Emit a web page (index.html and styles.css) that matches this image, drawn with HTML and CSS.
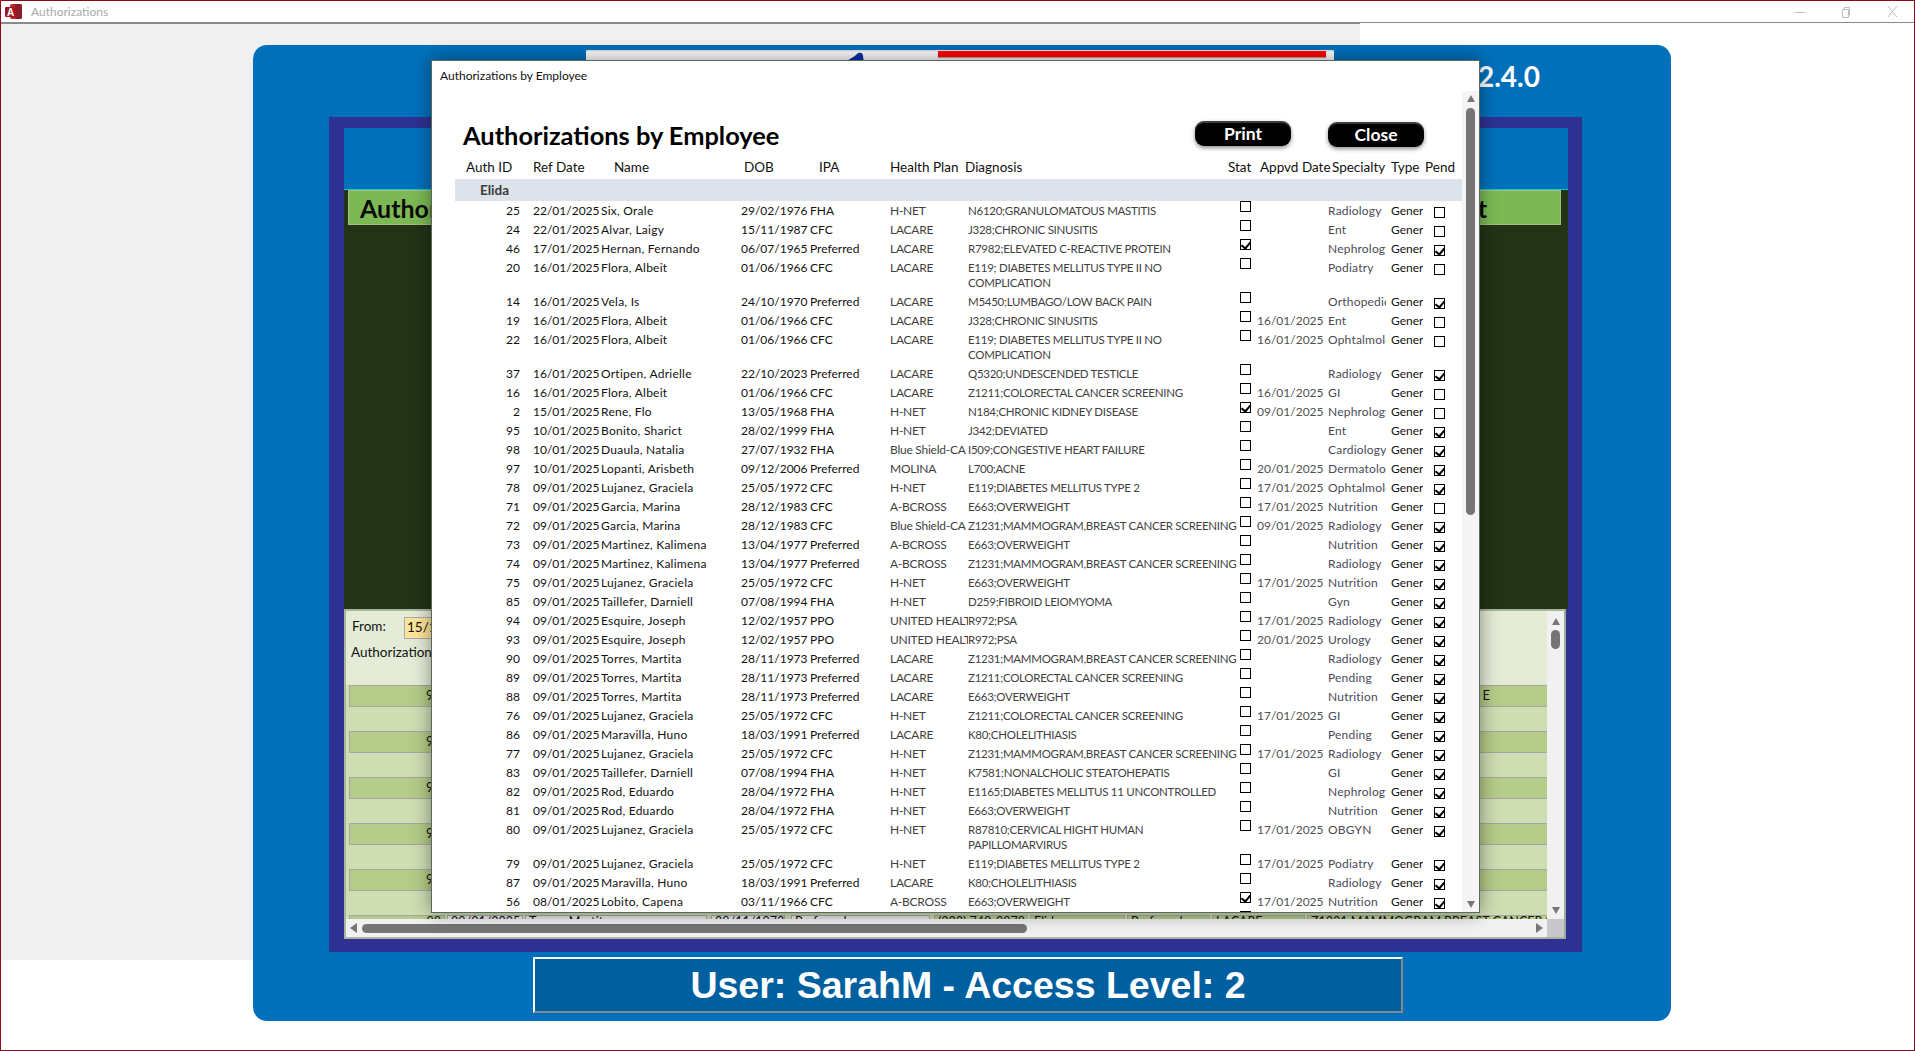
FILE: index.html
```html
<!DOCTYPE html>
<html lang="en">
<head>
<meta charset="utf-8">
<title>Authorizations</title>
<link rel="stylesheet" href="styles.css">
</head>
<body>
<div class="window">
  <header class="titlebar">
    <svg class="app-icon" viewBox="0 0 17 17" width="17" height="17"><rect x="5" y="1" width="12" height="15" rx="2" fill="#b02a34"/><rect x="10" y="1" width="7" height="15" rx="2" fill="#8e1c26"/><rect x="0" y="4" width="11" height="10" rx="1" fill="#a4161f"/><text x="2" y="12.500" class="app-letter">A</text></svg>
    <span class="app-title">Authorizations</span>
    <div class="win-controls">
      <svg width="10" height="10" viewBox="0 0 10 10"><path d="M0 5.500H10" stroke="#bbb"/></svg>
      <svg width="10" height="12" viewBox="0 0 10 12"><path d="M1.500 3.500H7.500V11.500H1.500ZM3.500 3V1.500H8.500V9H8" fill="none" stroke="#bbb"/></svg>
      <svg width="11" height="11" viewBox="0 0 11 11"><path d="M1 0L10 11M10 0L1 11" stroke="#bbb"/></svg>
    </div>
  </header>
  <main class="client">
    <div class="backdrop"></div>
    <section class="panel">
      <div class="topstrip">
        <svg class="blob" width="18" height="11" viewBox="0 0 18 11"><path d="M0 11C1 7 8 6 11 2C13 0 17 0 17 4L18 11Z" fill="#0a2fa8"/></svg>
        <span class="redbar"></span>
      </div>
      <div class="version">Version 2.4.0</div>
      <div class="frame">
        <div class="frame-blue"></div>
        <div class="darkarea">
          <div class="greenhead"><span>Authorizations by Employee Report</span><span>t</span></div>
        </div>
        <div class="subform">
          <div class="subform-body">
            <div class="formhead">
              <div class="fromline"><span class="lbl">From:</span><span class="fromdate">15/1</span></div>
              <div class="authlbl">Authorizations</div>
            </div>
            <div class="greenrow"><div class="band"><span class="bandnum">9</span><span class="bandend">E</span></div></div>
            <div class="greenrow"><div class="band"><span class="bandnum">9</span></div></div>
            <div class="greenrow"><div class="band"><span class="bandnum">9</span></div></div>
            <div class="greenrow"><div class="band"><span class="bandnum">9</span></div></div>
            <div class="greenrow"><div class="band"><span class="bandnum">9</span></div></div>
            <div class="cellrow">
              <span class="c c1">88</span><span class="c c2">09/01/2025</span><span class="c c3">Torres, Martita</span><span class="c c4">28/11/1973</span><span class="c c5">Preferred</span><span class="c c6">(323) 740-9878</span><span class="c c7">Elida</span><span class="c c8">Preferred</span><span class="c c9">LACARE</span><span class="c c10">Z1231;MAMMOGRAM,BREAST CANCER SCREENING</span>
            </div>
          </div>
          <div class="vbar"><i class="arrow up"></i><i class="vthumb"></i><i class="arrow down push"></i></div>
          <div class="hbar"><i class="arrow left"></i><i class="hthumb"></i><i class="arrow right push"></i></div>
          <div class="corner"></div>
        </div>
      </div>
      <div class="userbar">User: SarahM - Access Level: 2</div>
    </section>

    <section class="dialog">
      <div class="dlg-title">Authorizations by Employee</div>
      <div class="dlg-scroll"><i class="arrow up"></i><i class="dthumb"></i><i class="arrow down push"></i></div>
      <div class="report">
        <div class="rpt-top">
          <h1>Authorizations by Employee</h1>
          <button class="pill pill-print">Print</button>
          <button class="pill pill-close">Close</button>
        </div>
        <div class="row head">
          <span class="h-id">Auth ID</span><span class="h-date">Ref Date</span><span class="h-name">Name</span><span class="h-dob">DOB</span><span class="h-ipa">IPA</span><span class="h-plan">Health Plan</span><span class="h-diag">Diagnosis</span><span class="h-stat">Stat</span><span class="h-appr">Appvd Date</span><span class="h-spec">Specialty</span><span class="h-type">Type</span><span class="h-pend">Pend</span>
        </div>
        <div class="group">Elida</div>

        <div class="row"><span class="id">25</span><span class="dt">22/01/2025</span><span class="nm">Six, Orale</span><span class="dob">29/02/1976</span><span class="ipa">FHA</span><span class="pl">H-NET</span><span class="dg">N6120;GRANULOMATOUS MASTITIS</span><i class="cb st"></i><span class="ap"></span><span class="sp">Radiology</span><span class="ty">General</span><i class="cb pd"></i></div>
        <div class="row"><span class="id">24</span><span class="dt">22/01/2025</span><span class="nm">Alvar, Laigy</span><span class="dob">15/11/1987</span><span class="ipa">CFC</span><span class="pl">LACARE</span><span class="dg">J328;CHRONIC SINUSITIS</span><i class="cb st"></i><span class="ap"></span><span class="sp">Ent</span><span class="ty">General</span><i class="cb pd"></i></div>
        <div class="row"><span class="id">46</span><span class="dt">17/01/2025</span><span class="nm">Hernan, Fernando</span><span class="dob">06/07/1965</span><span class="ipa">Preferred</span><span class="pl">LACARE</span><span class="dg">R7982;ELEVATED C-REACTIVE PROTEIN</span><i class="cb st on"></i><span class="ap"></span><span class="sp">Nephrology</span><span class="ty">General</span><i class="cb pd on"></i></div>
        <div class="row tall"><span class="id">20</span><span class="dt">16/01/2025</span><span class="nm">Flora, Albeit</span><span class="dob">01/06/1966</span><span class="ipa">CFC</span><span class="pl">LACARE</span><span class="dg">E119; DIABETES MELLITUS TYPE II NO<br>COMPLICATION</span><i class="cb st"></i><span class="ap"></span><span class="sp">Podiatry</span><span class="ty">General</span><i class="cb pd"></i></div>
        <div class="row"><span class="id">14</span><span class="dt">16/01/2025</span><span class="nm">Vela, Is</span><span class="dob">24/10/1970</span><span class="ipa">Preferred</span><span class="pl">LACARE</span><span class="dg">M5450;LUMBAGO/LOW BACK PAIN</span><i class="cb st"></i><span class="ap"></span><span class="sp">Orthopedics</span><span class="ty">General</span><i class="cb pd on"></i></div>
        <div class="row"><span class="id">19</span><span class="dt">16/01/2025</span><span class="nm">Flora, Albeit</span><span class="dob">01/06/1966</span><span class="ipa">CFC</span><span class="pl">LACARE</span><span class="dg">J328;CHRONIC SINUSITIS</span><i class="cb st"></i><span class="ap">16/01/2025</span><span class="sp">Ent</span><span class="ty">General</span><i class="cb pd"></i></div>
        <div class="row tall"><span class="id">22</span><span class="dt">16/01/2025</span><span class="nm">Flora, Albeit</span><span class="dob">01/06/1966</span><span class="ipa">CFC</span><span class="pl">LACARE</span><span class="dg">E119; DIABETES MELLITUS TYPE II NO<br>COMPLICATION</span><i class="cb st"></i><span class="ap">16/01/2025</span><span class="sp">Ophtalmology</span><span class="ty">General</span><i class="cb pd"></i></div>
        <div class="row"><span class="id">37</span><span class="dt">16/01/2025</span><span class="nm">Ortipen, Adrielle</span><span class="dob">22/10/2023</span><span class="ipa">Preferred</span><span class="pl">LACARE</span><span class="dg">Q5320;UNDESCENDED TESTICLE</span><i class="cb st"></i><span class="ap"></span><span class="sp">Radiology</span><span class="ty">General</span><i class="cb pd on"></i></div>
        <div class="row"><span class="id">16</span><span class="dt">16/01/2025</span><span class="nm">Flora, Albeit</span><span class="dob">01/06/1966</span><span class="ipa">CFC</span><span class="pl">LACARE</span><span class="dg">Z1211;COLORECTAL CANCER SCREENING</span><i class="cb st"></i><span class="ap">16/01/2025</span><span class="sp">GI</span><span class="ty">General</span><i class="cb pd"></i></div>
        <div class="row"><span class="id">2</span><span class="dt">15/01/2025</span><span class="nm">Rene, Flo</span><span class="dob">13/05/1968</span><span class="ipa">FHA</span><span class="pl">H-NET</span><span class="dg">N184;CHRONIC KIDNEY DISEASE</span><i class="cb st on"></i><span class="ap">09/01/2025</span><span class="sp">Nephrology</span><span class="ty">General</span><i class="cb pd"></i></div>
        <div class="row"><span class="id">95</span><span class="dt">10/01/2025</span><span class="nm">Bonito, Sharict</span><span class="dob">28/02/1999</span><span class="ipa">FHA</span><span class="pl">H-NET</span><span class="dg">J342;DEVIATED</span><i class="cb st"></i><span class="ap"></span><span class="sp">Ent</span><span class="ty">General</span><i class="cb pd on"></i></div>
        <div class="row"><span class="id">98</span><span class="dt">10/01/2025</span><span class="nm">Duaula, Natalia</span><span class="dob">27/07/1932</span><span class="ipa">FHA</span><span class="pl">Blue Shield-CA</span><span class="dg">I509;CONGESTIVE HEART FAILURE</span><i class="cb st"></i><span class="ap"></span><span class="sp">Cardiology</span><span class="ty">General</span><i class="cb pd on"></i></div>
        <div class="row"><span class="id">97</span><span class="dt">10/01/2025</span><span class="nm">Lopanti, Arisbeth</span><span class="dob">09/12/2006</span><span class="ipa">Preferred</span><span class="pl">MOLINA</span><span class="dg">L700;ACNE</span><i class="cb st"></i><span class="ap">20/01/2025</span><span class="sp">Dermatology</span><span class="ty">General</span><i class="cb pd on"></i></div>
        <div class="row"><span class="id">78</span><span class="dt">09/01/2025</span><span class="nm">Lujanez, Graciela</span><span class="dob">25/05/1972</span><span class="ipa">CFC</span><span class="pl">H-NET</span><span class="dg">E119;DIABETES MELLITUS TYPE 2</span><i class="cb st"></i><span class="ap">17/01/2025</span><span class="sp">Ophtalmology</span><span class="ty">General</span><i class="cb pd on"></i></div>
        <div class="row"><span class="id">71</span><span class="dt">09/01/2025</span><span class="nm">Garcia, Marina</span><span class="dob">28/12/1983</span><span class="ipa">CFC</span><span class="pl">A-BCROSS</span><span class="dg">E663;OVERWEIGHT</span><i class="cb st"></i><span class="ap">17/01/2025</span><span class="sp">Nutrition</span><span class="ty">General</span><i class="cb pd"></i></div>
        <div class="row"><span class="id">72</span><span class="dt">09/01/2025</span><span class="nm">Garcia, Marina</span><span class="dob">28/12/1983</span><span class="ipa">CFC</span><span class="pl">Blue Shield-CA</span><span class="dg">Z1231;MAMMOGRAM,BREAST CANCER SCREENING</span><i class="cb st"></i><span class="ap">09/01/2025</span><span class="sp">Radiology</span><span class="ty">General</span><i class="cb pd on"></i></div>
        <div class="row"><span class="id">73</span><span class="dt">09/01/2025</span><span class="nm">Martinez, Kalimena</span><span class="dob">13/04/1977</span><span class="ipa">Preferred</span><span class="pl">A-BCROSS</span><span class="dg">E663;OVERWEIGHT</span><i class="cb st"></i><span class="ap"></span><span class="sp">Nutrition</span><span class="ty">General</span><i class="cb pd on"></i></div>
        <div class="row"><span class="id">74</span><span class="dt">09/01/2025</span><span class="nm">Martinez, Kalimena</span><span class="dob">13/04/1977</span><span class="ipa">Preferred</span><span class="pl">A-BCROSS</span><span class="dg">Z1231;MAMMOGRAM,BREAST CANCER SCREENING</span><i class="cb st"></i><span class="ap"></span><span class="sp">Radiology</span><span class="ty">General</span><i class="cb pd on"></i></div>
        <div class="row"><span class="id">75</span><span class="dt">09/01/2025</span><span class="nm">Lujanez, Graciela</span><span class="dob">25/05/1972</span><span class="ipa">CFC</span><span class="pl">H-NET</span><span class="dg">E663;OVERWEIGHT</span><i class="cb st"></i><span class="ap">17/01/2025</span><span class="sp">Nutrition</span><span class="ty">General</span><i class="cb pd on"></i></div>
        <div class="row"><span class="id">85</span><span class="dt">09/01/2025</span><span class="nm">Taillefer, Darniell</span><span class="dob">07/08/1994</span><span class="ipa">FHA</span><span class="pl">H-NET</span><span class="dg">D259;FIBROID LEIOMYOMA</span><i class="cb st"></i><span class="ap"></span><span class="sp">Gyn</span><span class="ty">General</span><i class="cb pd on"></i></div>
        <div class="row"><span class="id">94</span><span class="dt">09/01/2025</span><span class="nm">Esquire, Joseph</span><span class="dob">12/02/1957</span><span class="ipa">PPO</span><span class="pl">UNITED HEALTH</span><span class="dg">R972;PSA</span><i class="cb st"></i><span class="ap">17/01/2025</span><span class="sp">Radiology</span><span class="ty">General</span><i class="cb pd on"></i></div>
        <div class="row"><span class="id">93</span><span class="dt">09/01/2025</span><span class="nm">Esquire, Joseph</span><span class="dob">12/02/1957</span><span class="ipa">PPO</span><span class="pl">UNITED HEALTH</span><span class="dg">R972;PSA</span><i class="cb st"></i><span class="ap">20/01/2025</span><span class="sp">Urology</span><span class="ty">General</span><i class="cb pd on"></i></div>
        <div class="row"><span class="id">90</span><span class="dt">09/01/2025</span><span class="nm">Torres, Martita</span><span class="dob">28/11/1973</span><span class="ipa">Preferred</span><span class="pl">LACARE</span><span class="dg">Z1231;MAMMOGRAM,BREAST CANCER SCREENING</span><i class="cb st"></i><span class="ap"></span><span class="sp">Radiology</span><span class="ty">General</span><i class="cb pd on"></i></div>
        <div class="row"><span class="id">89</span><span class="dt">09/01/2025</span><span class="nm">Torres, Martita</span><span class="dob">28/11/1973</span><span class="ipa">Preferred</span><span class="pl">LACARE</span><span class="dg">Z1211;COLORECTAL CANCER SCREENING</span><i class="cb st"></i><span class="ap"></span><span class="sp">Pending</span><span class="ty">General</span><i class="cb pd on"></i></div>
        <div class="row"><span class="id">88</span><span class="dt">09/01/2025</span><span class="nm">Torres, Martita</span><span class="dob">28/11/1973</span><span class="ipa">Preferred</span><span class="pl">LACARE</span><span class="dg">E663;OVERWEIGHT</span><i class="cb st"></i><span class="ap"></span><span class="sp">Nutrition</span><span class="ty">General</span><i class="cb pd on"></i></div>
        <div class="row"><span class="id">76</span><span class="dt">09/01/2025</span><span class="nm">Lujanez, Graciela</span><span class="dob">25/05/1972</span><span class="ipa">CFC</span><span class="pl">H-NET</span><span class="dg">Z1211;COLORECTAL CANCER SCREENING</span><i class="cb st"></i><span class="ap">17/01/2025</span><span class="sp">GI</span><span class="ty">General</span><i class="cb pd on"></i></div>
        <div class="row"><span class="id">86</span><span class="dt">09/01/2025</span><span class="nm">Maravilla, Huno</span><span class="dob">18/03/1991</span><span class="ipa">Preferred</span><span class="pl">LACARE</span><span class="dg">K80;CHOLELITHIASIS</span><i class="cb st"></i><span class="ap"></span><span class="sp">Pending</span><span class="ty">General</span><i class="cb pd on"></i></div>
        <div class="row"><span class="id">77</span><span class="dt">09/01/2025</span><span class="nm">Lujanez, Graciela</span><span class="dob">25/05/1972</span><span class="ipa">CFC</span><span class="pl">H-NET</span><span class="dg">Z1231;MAMMOGRAM,BREAST CANCER SCREENING</span><i class="cb st"></i><span class="ap">17/01/2025</span><span class="sp">Radiology</span><span class="ty">General</span><i class="cb pd on"></i></div>
        <div class="row"><span class="id">83</span><span class="dt">09/01/2025</span><span class="nm">Taillefer, Darniell</span><span class="dob">07/08/1994</span><span class="ipa">FHA</span><span class="pl">H-NET</span><span class="dg">K7581;NONALCHOLIC STEATOHEPATIS</span><i class="cb st"></i><span class="ap"></span><span class="sp">GI</span><span class="ty">General</span><i class="cb pd on"></i></div>
        <div class="row"><span class="id">82</span><span class="dt">09/01/2025</span><span class="nm">Rod, Eduardo</span><span class="dob">28/04/1972</span><span class="ipa">FHA</span><span class="pl">H-NET</span><span class="dg">E1165;DIABETES MELLITUS 11 UNCONTROLLED</span><i class="cb st"></i><span class="ap"></span><span class="sp">Nephrology</span><span class="ty">General</span><i class="cb pd on"></i></div>
        <div class="row"><span class="id">81</span><span class="dt">09/01/2025</span><span class="nm">Rod, Eduardo</span><span class="dob">28/04/1972</span><span class="ipa">FHA</span><span class="pl">H-NET</span><span class="dg">E663;OVERWEIGHT</span><i class="cb st"></i><span class="ap"></span><span class="sp">Nutrition</span><span class="ty">General</span><i class="cb pd on"></i></div>
        <div class="row tall"><span class="id">80</span><span class="dt">09/01/2025</span><span class="nm">Lujanez, Graciela</span><span class="dob">25/05/1972</span><span class="ipa">CFC</span><span class="pl">H-NET</span><span class="dg">R87810;CERVICAL HIGHT HUMAN<br>PAPILLOMARVIRUS</span><i class="cb st"></i><span class="ap">17/01/2025</span><span class="sp">OBGYN</span><span class="ty">General</span><i class="cb pd on"></i></div>
        <div class="row"><span class="id">79</span><span class="dt">09/01/2025</span><span class="nm">Lujanez, Graciela</span><span class="dob">25/05/1972</span><span class="ipa">CFC</span><span class="pl">H-NET</span><span class="dg">E119;DIABETES MELLITUS TYPE 2</span><i class="cb st"></i><span class="ap">17/01/2025</span><span class="sp">Podiatry</span><span class="ty">General</span><i class="cb pd on"></i></div>
        <div class="row"><span class="id">87</span><span class="dt">09/01/2025</span><span class="nm">Maravilla, Huno</span><span class="dob">18/03/1991</span><span class="ipa">Preferred</span><span class="pl">LACARE</span><span class="dg">K80;CHOLELITHIASIS</span><i class="cb st"></i><span class="ap"></span><span class="sp">Radiology</span><span class="ty">General</span><i class="cb pd on"></i></div>
        <div class="row"><span class="id">56</span><span class="dt">08/01/2025</span><span class="nm">Lobito, Capena</span><span class="dob">03/11/1966</span><span class="ipa">CFC</span><span class="pl">A-BCROSS</span><span class="dg">E663;OVERWEIGHT</span><i class="cb st on"></i><span class="ap">17/01/2025</span><span class="sp">Nutrition</span><span class="ty">General</span><i class="cb pd on"></i></div>
        <div class="row"><span class="id"></span><span class="dt"></span><span class="nm"></span><span class="dob"></span><span class="ipa"></span><span class="pl"></span><span class="dg"></span><i class="cb st"></i></div>
      </div>
    </section>
  </main>
</div>
</body>
</html>
```

FILE: styles.css
```css
* { box-sizing: border-box; }
html, body { margin: 0; height: 100%; overflow: hidden; background: #fff; }
body { font-family: "Lato", "Liberation Sans", sans-serif; color: #111; }
i { display: block; font-style: normal; }

.window { width: 1915px; height: 1051px; border: 1px solid #8b0a14; display: flex; flex-direction: column; overflow: hidden; background: #fff; }

.titlebar { height: 22px; flex: none; display: flex; align-items: center; padding-left: 4px; background: #fff; border-bottom: 1px solid #8a8a8a; }
.app-icon { flex: none; }
.app-letter { font: bold 10px "Liberation Sans", sans-serif; fill: #fff; }
.app-title { margin-left: 9px; font-size: 12px; color: #aaa; }
.win-controls { margin-left: auto; width: 103px; margin-right: 16px; display: flex; justify-content: space-between; align-items: center; }

.client { position: relative; flex: 1; min-height: 0; background: #fff; }
.backdrop { position: absolute; left: 0; top: 0; width: 1359px; height: 937px; background: #f0f0f0; border-top: 1px solid #8a8a8a; }

.panel { position: relative; margin: 22px 0 0 252px; width: 1418px; height: 976px; background: #0070bb; border-radius: 14px; padding: 72px 88px 0 76px; }
.topstrip { position: absolute; left: 333px; top: 5px; width: 748px; height: 20px; background: linear-gradient(#d8d8d8, #fdfdfd 12%, #fff); }
.blob { position: absolute; left: 260px; top: 2px; }
.redbar { position: absolute; left: 352px; top: 1px; width: 388px; height: 6px; background: #ff0505; box-shadow: 0 1px 1px #c99; }
.version { position: absolute; right: 131px; top: 14px; font-size: 28px; font-weight: 700; color: #fff; white-space: nowrap; }

.frame { width: 1253px; height: 835px; background: #2e3192; padding: 11px 14px 13px 15px; display: flex; flex-direction: column; }
.frame-blue { height: 62px; flex: none; background: #0070bb; border-bottom: 1px solid #19c7c7; }
.darkarea { height: 419px; flex: none; background: #223316; padding-left: 4px; }
.greenhead { width: 1213px; height: 35px; background: #7cb955; border: 1px solid #a0c080; display: flex; justify-content: space-between; align-items: center; padding: 0 73px 0 11px; font-size: 25px; font-weight: 700; color: #0a0a0a; white-space: nowrap; }

.subform { flex: 1; min-height: 0; position: relative; margin-right: 2px; display: grid; grid-template-columns: 1fr 17px; grid-template-rows: 1fr 18px; border: 2px solid #a9b59c; border-right-color: #9fa99a; background: #cfddb2; }
.subform-body { overflow: hidden; min-height: 0; }
.formhead { height: 74px; background: #e4ecd8; padding: 6px 5px 0; font-size: 13.500px; }
.fromline { display: flex; align-items: flex-start; height: 22px; }
.lbl { width: 53px; padding-left: 1px; line-height: 18px; }
.fromdate { width: 120px; height: 22px; background: #ffe59a; border: 1px solid #aaa; padding: 1px 2px; }
.authlbl { margin-top: 5px; }
.greenrow { height: 46px; }
.band { height: 22px; background: #b5cb88; border: 1px solid #a6a6a6; border-width: 1px 0 1px 1px; margin-left: 3px; display: flex; justify-content: space-between; font-size: 13px; padding: 1px 0 0; }
.bandnum { margin-left: 76px; }
.bandend { margin-right: 57px; }
.cellrow { display: flex; height: 6px; gap: 2px; margin-left: 3px; overflow: hidden; }
.c { display: block; height: 22px; font-size: 12.500px; line-height: 12px; padding: 0 3px; white-space: nowrap; overflow: hidden; border: 1px solid #a6a6a6; background: #b5cb88; flex: none; }
.c1 { width: 96px; text-align: right; }
.c2 { width: 76px; background: #e6e6e6; }
.c3 { width: 182px; background: #e6e6e6; }
.c4 { width: 74px; background: #e6e6e6; margin-left: 2px; }
.c5 { width: 139px; background: #e6e6e6; margin-left: 4px; }
.c6 { width: 94px; margin-left: 2px; }
.c7 { width: 95px; }
.c8 { width: 83px; }
.c9 { width: 93px; }
.c10 { width: 245px; }

.vbar { grid-row: 1; grid-column: 2; background: #f1f1f1; display: flex; flex-direction: column; align-items: center; padding: 7px 0 5px; }
.hbar { grid-row: 2; grid-column: 1; background: #f1f1f1; display: flex; align-items: center; padding: 0 4px; }
.corner { grid-row: 2; grid-column: 2; background: #c8c8cc; }
.vthumb { width: 9px; height: 19px; margin-top: 5px; background: #757575; border-radius: 5px; }
.hthumb { width: 665px; height: 9px; margin-left: 5px; background: #757575; border-radius: 5px; }
.arrow { flex: none; width: 0; height: 0; border: 5px solid transparent; }
.arrow.up { border-top-width: 0; border-bottom: 7px solid #777; border-left-width: 4px; border-right-width: 4px; }
.arrow.down { border-bottom-width: 0; border-top: 7px solid #777; border-left-width: 4px; border-right-width: 4px; }
.arrow.left { border-left-width: 0; border-right: 7px solid #777; }
.arrow.right { border-right-width: 0; border-left: 7px solid #777; }
.push { margin-top: auto; }
.hbar .push { margin-top: 0; margin-left: auto; }

.userbar { margin: 5px 0 0 204px; width: 870px; height: 56px; background: #005f9f; border: 2px solid; border-color: #fff #888 #888 #fff; color: #fff; font: 700 37.500px/52px "Liberation Sans", sans-serif; text-align: center; }

.dialog { position: absolute; left: 430px; top: 37px; width: 1049px; height: 853px; background: #fff; border: 1px solid #5a6a5a; box-shadow: 0 0 18px rgba(0, 0, 0, .42); overflow: hidden; }
.dlg-title { position: absolute; left: 8px; top: 7px; font-size: 12px; color: #111; }
.dlg-scroll { position: absolute; right: 0; top: 30px; bottom: 0; width: 17px; background: #f5f5f5; display: flex; flex-direction: column; align-items: center; padding: 4px 0; }
.dthumb { width: 9px; height: 407px; margin-top: 6px; background: #757575; border-radius: 5px; }

.report { padding: 0 0 0 23px; }
.rpt-top { height: 94px; display: flex; align-items: flex-start; padding: 59px 0 0 8px; }
.rpt-top h1 { margin: 0; font-size: 25.400px; font-weight: 700; line-height: 30px; color: #000; white-space: nowrap; width: 732px; }
.pill { width: 96px; height: 25px; border: 0; padding: 0; background: #000; color: #fff; font: 700 17.500px "Lato", sans-serif; border-radius: 9px; box-shadow: 0 2px 4px rgba(0, 0, 0, .45), inset 0 2px 1px rgba(255, 255, 255, .25); flex: none; }
.pill-print { margin-top: 1px; }
.pill-close { margin: 2px 0 0 37px; }

.row { display: grid; grid-template-columns: 65px 13px 68px 140px 69px 80px 78px 272px 17px 71px 63px 43px 14px; height: 19px; font-size: 12px; line-height: 19px; white-space: nowrap; color: #111; }
.row.tall { height: 34px; }
.row > span { overflow: hidden; }
.row .id { grid-column: 1; text-align: right; }
.row .dt { grid-column: 3; }
.row .nm { grid-column: 4; letter-spacing: .25px; }
.row .dob { grid-column: 5; }
.row .ipa { grid-column: 6; }
.row .pl { grid-column: 7; color: #3f3f3f; font-size: 12px; letter-spacing: -.25px; }
.row .dg { grid-column: 8; color: #3f3f3f; font-size: 11.500px; letter-spacing: -.28px; line-height: 15px; padding-top: 2px; }
.row .st { grid-column: 9; }
.row .ap { grid-column: 10; color: #505050; }
.row .sp { grid-column: 11; color: #4a4a58; letter-spacing: .2px; margin-right: 5px; }
.row .ty { grid-column: 12; margin-right: 11px; }
.row .pd { grid-column: 13; margin-top: 6px; }

.cb { width: 11px; height: 11px; border: 1px solid #000; background: #fff; position: relative; }
.cb.on::after { content: ""; position: absolute; left: 2px; top: 0; width: 4px; height: 7px; border: solid #000; border-width: 0 2px 2px 0; transform: rotate(40deg); }

.row.head { height: 24px; font-size: 13.500px; line-height: 25px; color: #111; position: relative; display: flex; }
.head span { position: absolute; top: 0; white-space: nowrap; overflow: visible; }
.h-id { left: 11px; }
.h-date { left: 78px; }
.h-name { left: 159px; }
.h-dob { left: 289px; }
.h-ipa { left: 364px; }
.h-plan { left: 435px; }
.h-diag { left: 510px; }
.h-stat { left: 773px; }
.h-appr { left: 805px; }
.h-spec { left: 877px; }
.h-type { left: 936px; }
.h-pend { left: 970px; }

.group { width: 1007px; height: 22px; background: #dde3ea; padding-left: 25px; font-size: 13.500px; font-weight: 700; line-height: 22px; color: #3a3a3a; }
```
